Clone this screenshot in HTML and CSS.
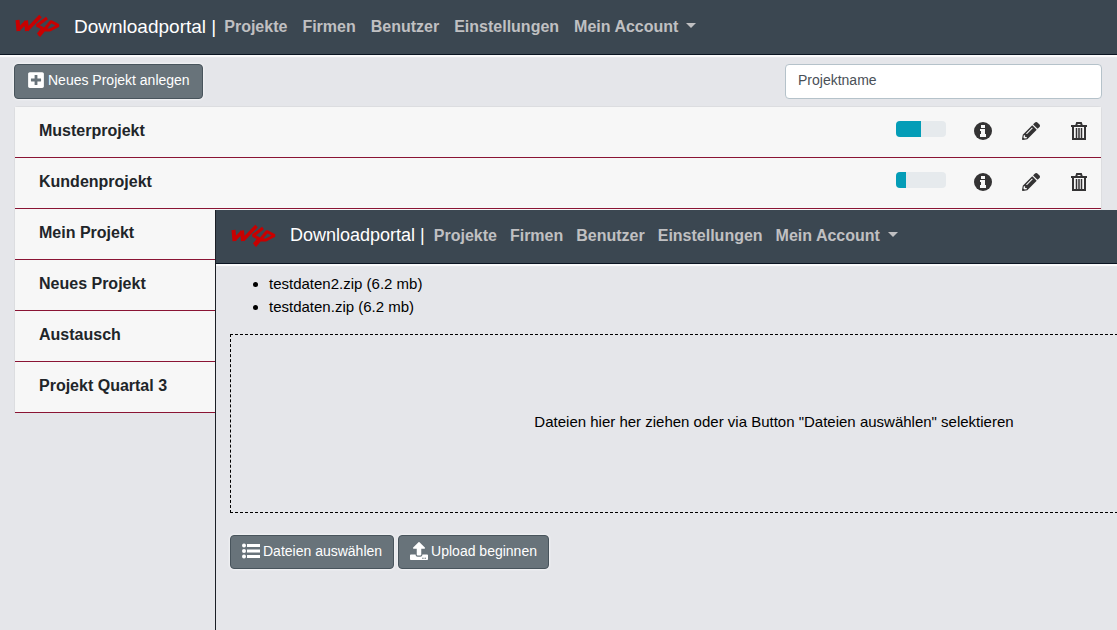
FILE: index.html
```html
<!DOCTYPE html>
<html lang="de">
<head>
<meta charset="UTF-8">
<meta name="viewport" content="width=device-width, initial-scale=1">
<title>Downloadportal</title>
<link rel="stylesheet" href="styles.css">
</head>
<body>
    <svg class="sprite" aria-hidden="true">
        <symbol id="logo" viewBox="0 0 46 24">
            <g fill="none" stroke="#c80000" stroke-linejoin="bevel">
                <path stroke-width="4" d="M2.500 6L3.500 17M11 6.500L12 17"/>
                <path stroke-width="3.500" d="M3 16L11 8M12 16L25.500 2"/>
                <path stroke-width="3" d="M32 4L22 11.500L28 14.500L23 20.500M24 22L36 7.500L43.500 11.500L35 16H30"/>
            </g>
        </symbol>
        <symbol id="plus" viewBox="0 0 448 512">
            <path d="M400 32H48C21 32 0 53 0 80v352c0 27 21 48 48 48h352c27 0 48-21 48-48V80c0-27-21-48-48-48zm-32 252c0 7-5 12-12 12h-92v92c0 7-5 12-12 12h-56c-7 0-12-5-12-12v-92H92c-7 0-12-5-12-12v-56c0-7 5-12 12-12h92v-92c0-7 5-12 12-12h56c7 0 12 5 12 12v92h92c7 0 12 5 12 12v56z"/>
        </symbol>
        <symbol id="info" viewBox="0 0 18 18">
            <circle cx="9" cy="9" r="9"/>
            <path fill="#f7f7f7" d="M7 3h4v3H7zM6 7h5v5h1v3H6v-3h1V9H6z"/>
        </symbol>
        <symbol id="pencil" viewBox="0 0 512 512">
            <path d="M498 142l-46 46c-5 5-12 5-17 0L324 77c-5-5-5-12 0-17l46-46c19-19 49-19 68 0l60 60c19 19 19 49 0 68zm-214-42L22 362 0 484c-3 16 12 30 28 28l122-22 262-262c5-5 5-12 0-17L301 100c-5-5-12-5-17 0zM124 340c-5-6-5-14 0-20l154-154c6-5 14-5 20 0s5 14 0 20L144 340c-6 5-14 5-20 0zm-36 84h48v36l-64 12-32-31 12-65h36v48z"/>
        </symbol>
        <symbol id="trash" viewBox="0 0 18 18">
            <path fill="none" stroke="currentColor" stroke-width="2" d="M1 4h16M6 4l1-3h4l1 3M3 5v12h12V5"/>
            <path fill="none" stroke="currentColor" stroke-width="1.500" d="M6.500 6v10M9 6v10M11.500 6v10"/>
        </symbol>
        <symbol id="list" viewBox="0 0 18 16">
            <circle cx="2" cy="2.500" r="2"/>
            <circle cx="2" cy="8" r="2"/>
            <circle cx="2" cy="13.500" r="2"/>
            <path d="M5 1h13v3H5zM5 6.500h13v3H5zM5 12h13v3H5z"/>
        </symbol>
        <symbol id="upload" viewBox="0 0 512 512">
            <path d="M296 384h-80c-13 0-24-11-24-24V192h-88c-18 0-27-21-14-34L242 6c8-8 20-8 28 0l152 152c13 13 4 34-14 34h-88v168c0 13-11 24-24 24zm216-8v112c0 13-11 24-24 24H24c-13 0-24-11-24-24V376c0-13 11-24 24-24h136v8c0 31 25 56 56 56h80c31 0 56-25 56-56v-8h136c13 0 24 11 24 24zm-124 88a20 20 0 1 0-40 0 20 20 0 0 0 40 0zm64 0a20 20 0 1 0-40 0 20 20 0 0 0 40 0z"/>
        </symbol>
    </svg>

    <nav class="navbar">
        <a class="brand" href="#"><svg class="logo"><use href="#logo"/></svg>Downloadportal |</a>
        <a class="nav-link" href="#">Projekte</a>
        <a class="nav-link" href="#">Firmen</a>
        <a class="nav-link" href="#">Benutzer</a>
        <a class="nav-link" href="#">Einstellungen</a>
        <a class="nav-link dropdown" href="#">Mein Account</a>
    </nav>

    <main class="content">
        <div class="toolbar">
            <button type="button" class="btn"><svg class="icon"><use href="#plus"/></svg>Neues Projekt anlegen</button>
            <input type="text" class="search" placeholder="Projektname" aria-label="Projektname">
        </div>

        <ul class="projects">
            <li class="project">
                <span class="name">Musterprojekt</span>
                <div class="progress"><div class="bar" style="width: 50%"></div></div>
                <a class="action" href="#" aria-label="Info"><svg class="icon"><use href="#info"/></svg></a>
                <a class="action" href="#" aria-label="Bearbeiten"><svg class="icon"><use href="#pencil"/></svg></a>
                <a class="action" href="#" aria-label="Löschen"><svg class="icon"><use href="#trash"/></svg></a>
            </li>
            <li class="project">
                <span class="name">Kundenprojekt</span>
                <div class="progress"><div class="bar" style="width: 20%"></div></div>
                <a class="action" href="#" aria-label="Info"><svg class="icon"><use href="#info"/></svg></a>
                <a class="action" href="#" aria-label="Bearbeiten"><svg class="icon"><use href="#pencil"/></svg></a>
                <a class="action" href="#" aria-label="Löschen"><svg class="icon"><use href="#trash"/></svg></a>
            </li>
            <li class="project"><span class="name">Mein Projekt</span></li>
            <li class="project"><span class="name">Neues Projekt</span></li>
            <li class="project"><span class="name">Austausch</span></li>
            <li class="project"><span class="name">Projekt Quartal 3</span></li>
        </ul>
    </main>

    <!-- upload window, lies over the project list -->
    <section class="window">
        <div class="window-page">
            <nav class="navbar">
                <a class="brand" href="#"><svg class="logo"><use href="#logo"/></svg>Downloadportal |</a>
                <a class="nav-link" href="#">Projekte</a>
                <a class="nav-link" href="#">Firmen</a>
                <a class="nav-link" href="#">Benutzer</a>
                <a class="nav-link" href="#">Einstellungen</a>
                <a class="nav-link dropdown" href="#">Mein Account</a>
            </nav>
            <div class="content">
                <ul class="files">
                    <li>testdaten2.zip (6.2 mb)</li>
                    <li>testdaten.zip (6.2 mb)</li>
                </ul>
                <div class="dropzone">Dateien hier her ziehen oder via Button "Dateien auswählen" selektieren</div>
                <div class="buttons">
                    <button type="button" class="btn"><svg class="icon"><use href="#list"/></svg>Dateien auswählen</button>
                    <button type="button" class="btn"><svg class="icon"><use href="#upload"/></svg>Upload beginnen</button>
                </div>
            </div>
        </div>
    </section>
</body>
</html>
```

FILE: styles.css
```css
* {
    box-sizing: border-box;
}
body {
    margin: 0;
    min-height: 100vh;
    position: relative;
    background: #e5e6ea;
    color: #000;
    font: 16px/23px "Liberation Sans", Arial, sans-serif;
}
ul {
    margin: 0;
    padding: 0;
}
.sprite {
    position: absolute;
    width: 0;
    height: 0;
}

/* navbar */
.navbar {
    display: flex;
    align-items: center;
    gap: 15px;
    height: 55px;
    padding: 0 15px 2px;
    background: #3b4751;
    border-bottom: 1px solid #0b1522;
    box-shadow: 0 2px 1px #fafafb;
}
.brand {
    display: flex;
    align-items: center;
    margin-right: -7px;
    color: #fff;
    font-size: 19px;
    text-decoration: none;
    white-space: nowrap;
}
.logo {
    width: 46px;
    height: 24px;
    margin-right: 13px;
}
.nav-link {
    color: #c0c0c2;
    font-weight: bold;
    text-decoration: none;
    white-space: nowrap;
}
.dropdown::after {
    content: "";
    display: inline-block;
    margin-left: 8px;
    vertical-align: 4px;
    border-top: 5px solid;
    border-left: 5px solid transparent;
    border-right: 5px solid transparent;
}

/* project list */
.content {
    padding: 9px 15px 9px 14px;
}
.toolbar {
    display: flex;
    justify-content: space-between;
    margin-bottom: 7px;
}
.btn {
    display: inline-flex;
    align-items: center;
    gap: 3px;
    height: 35px;
    padding: 0 12px 3px;
    border: 1px solid #48545c;
    border-radius: 4px;
    background: #68737a;
    box-shadow: 0 0 3px #fff;
    color: #fff;
    font: 14px "Liberation Sans", Arial, sans-serif;
    white-space: nowrap;
}
.icon {
    display: block;
    width: 18px;
    height: 18px;
    fill: currentColor;
}
.search {
    width: 317px;
    height: 35px;
    padding: 0 12px 4px;
    border: 1px solid #b5c2ca;
    border-radius: 4px;
    background: #fff;
    font: 14px "Liberation Sans", Arial, sans-serif;
}
.search::placeholder {
    color: #495057;
    opacity: 1;
}
.projects {
    list-style: none;
    border: 1px solid #dcdde0;
    border-bottom: 0;
    border-radius: 4px 4px 0 0;
}
.project {
    display: flex;
    align-items: center;
    height: 51px;
    padding: 0 13px 3px 24px;
    background: #f7f7f7;
    border-bottom: 1px solid #8a1434;
}
.name {
    flex: 1;
    color: #212529;
    font-weight: bold;
}
.progress {
    width: 50px;
    height: 16px;
    margin: 0 28px 4px 0;
    border-radius: 4px;
    background: #e6eaed;
    overflow: hidden;
}
.bar {
    height: 100%;
    background: #049db7;
}
.action {
    color: #343334;
}
.action + .action {
    margin-left: 30px;
}

/* upload window */
.window {
    position: absolute;
    top: 210px;
    left: 215px;
    right: 0;
    bottom: 0;
    overflow: hidden;
    background: #e5e6ea;
    border-left: 1px solid #1b1f26;
}
.window-page {
    width: 100vw;
    font-size: 15px;
}
.window .navbar {
    gap: 13px;
    height: 54px;
    font-size: 16px;
}
.window .brand {
    margin-right: -4px;
    font-size: 18px;
}
.window .content {
    padding-top: 8px;
}
.window .btn {
    height: 34px;
    padding: 0 11px 2px;
}
.files {
    margin-bottom: 16px;
    padding-left: 39px;
}
.dropzone {
    display: flex;
    align-items: center;
    justify-content: center;
    height: 179px;
    margin-bottom: 22px;
    padding-bottom: 4px;
    border: 1px dashed #000;
}
.buttons {
    display: flex;
    gap: 4px;
}
```
